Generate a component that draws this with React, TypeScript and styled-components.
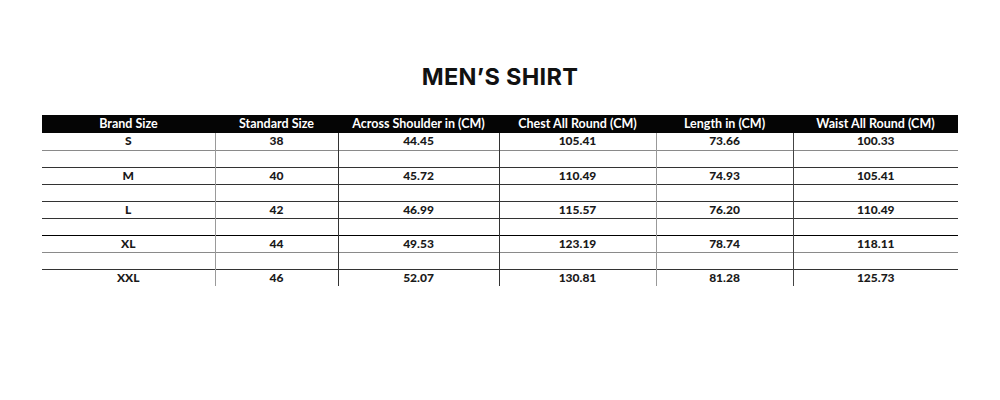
import React from "react";
import styled, { createGlobalStyle } from "styled-components";

const Global = createGlobalStyle`
  html, body { margin: 0; padding: 0; background: #fff; }
  body { width: 1000px; height: 400px; overflow: hidden; }
`;

const Page = styled.div`
  display: flex;
  flex-direction: column;
  align-items: center;
  padding-top: 60px;
`;

const Title = styled.h1`
  margin: 0 0 18px;
  height: 37px;
  line-height: 34px;
  font-family: Inter, "Open Sans", sans-serif;
  font-weight: 700;
  font-size: 23.5px;
  letter-spacing: 0.3px;
  color: #111;
`;

const Table = styled.table`
  width: 916px;
  border-collapse: collapse;
  table-layout: fixed;
  font-family: Lato, "Open Sans", sans-serif;
  font-weight: 900;
  font-size: 12px;
  color: #1a1a1a;
`;

const HeadCell = styled.th`
  background: #050505;
  color: #fff;
  height: 18px;
  padding: 0;
  font-weight: 700;
  font-size: 12.5px;
  text-align: center;
  line-height: 18px;
`;

const Row = styled.tr<{ $line: string; $h: number }>`
  height: ${(p) => p.$h}px;
  border-bottom: 1px solid ${(p) => p.$line};
`;

const Cell = styled.td<{ $divider: string }>`
  padding: 0;
  text-align: center;
  line-height: 15px;
  vertical-align: top;
  border-left: 1px solid ${(p) => p.$divider};
  &:first-child { border-left: none; }
`;

const headers = [
  "Brand Size",
  "Standard Size",
  "Across Shoulder in (CM)",
  "Chest All Round (CM)",
  "Length in (CM)",
  "Waist All Round (CM)",
];
const widths = [173, 123, 161, 157, 137, 165];
const dividers = ["none", "#9a9a9a", "#333", "#333", "#999", "#444"];

const data: (string[] | null)[] = [
  ["S", "38", "44.45", "105.41", "73.66", "100.33"],
  null,
  ["M", "40", "45.72", "110.49", "74.93", "105.41"],
  null,
  ["L", "42", "46.99", "115.57", "76.20", "110.49"],
  null,
  ["XL", "44", "49.53", "123.19", "78.74", "118.11"],
  null,
  ["XXL", "46", "52.07", "130.81", "81.28", "125.73"],
];
const lines = ["#8a8a8a", "#333", "#333", "#333", "#333", "#000", "#8a8a8a", "#333", "transparent"];

export default function App() {
  return (
    <>
      <Global />
      <Page>
        <Title>MEN’S SHIRT</Title>
        <Table>
          <colgroup>
            {widths.map((w, i) => (
              <col key={i} style={{ width: w }} />
            ))}
          </colgroup>
          <thead>
            <tr>
              {headers.map((h) => (
                <HeadCell key={h}>{h}</HeadCell>
              ))}
            </tr>
          </thead>
          <tbody>
            {data.map((row, r) => (
              <Row key={r} $line={lines[r]} $h={r === data.length - 1 ? 16 : 17}>
                {widths.map((_, c) => (
                  <Cell key={c} $divider={dividers[c]}>
                    {row ? row[c] : ""}
                  </Cell>
                ))}
              </Row>
            ))}
          </tbody>
        </Table>
      </Page>
    </>
  );
}
